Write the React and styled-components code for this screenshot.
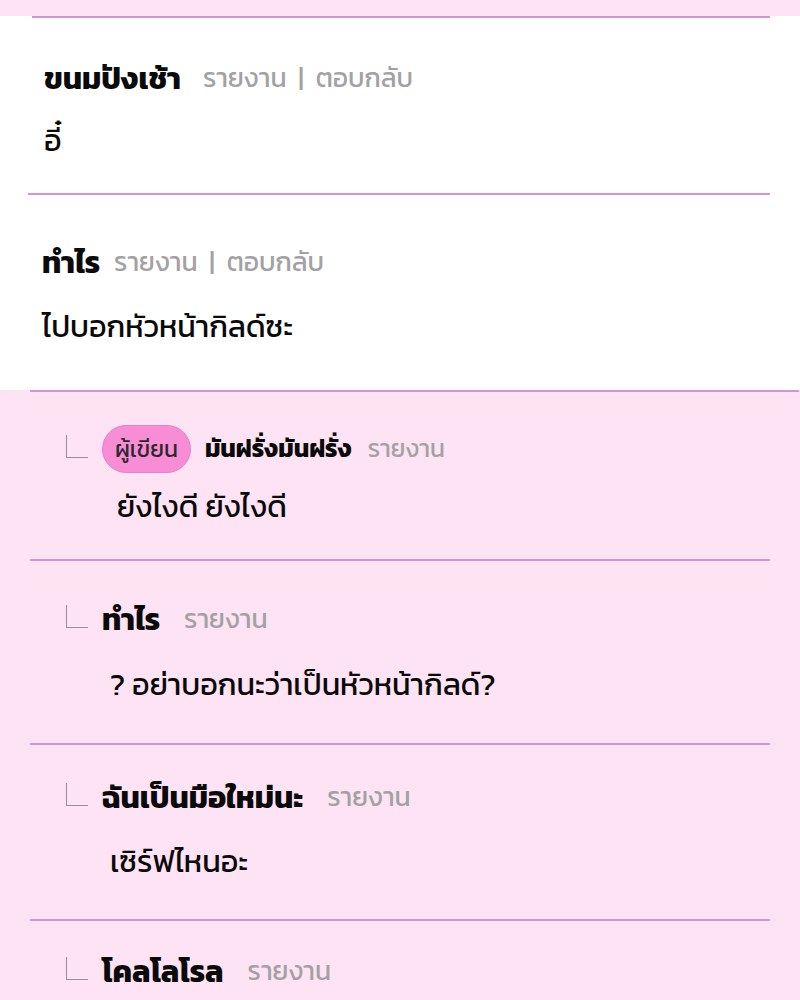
import React from 'react';
import styled, { createGlobalStyle } from 'styled-components';

const GlobalStyle = createGlobalStyle`
	html, body {
		margin: 0;
		padding: 0;
		background: #fde3f3;
	}
	body {
		font-family: Kanit, "Noto Sans Thai", "Liberation Sans", sans-serif;
		color: #111;
	}
`;

const Page = styled.div`
	width: 800px;
	height: 1000px;
	overflow: hidden;
	background: #fde3f3;
	padding-top: 16px;
	box-sizing: border-box;
`;

const Section = styled.div`
	background: ${(p) => (p.$white ? '#ffffff' : 'transparent')};
`;

const Item = styled.div`
	margin: 0 ${(p) => p.$mr || 30}px 0 ${(p) => p.$ml || 30}px;
	border-top: 2px solid #d493d2;
	padding: ${(p) => p.$pt}px 0 ${(p) => p.$pb}px ${(p) => p.$indent}px;
	display: flex;
	flex-direction: column;
	gap: ${(p) => p.$gap}px;
`;

const Header = styled.div`
	display: flex;
	align-items: center;
	height: 40px;
	gap: ${(p) => p.$gap}px;
`;

const Corner = styled.span`
	width: 21px;
	height: 22px;
	margin-top: -6px;
	border-left: 1.5px solid #9a8f98;
	border-bottom: 1.5px solid #9a8f98;
	flex-shrink: 0;
`;

const Name = styled.span`
	font-size: ${(p) => (p.$small ? 24.5 : 30.5)}px;
	font-weight: 700;
	color: #0a0a0a;
	line-height: 40px;
	white-space: nowrap;
`;

const Meta = styled.span`
	display: flex;
	gap: 12px;
	font-size: ${(p) => (p.$small ? 24.5 : 26.5)}px;
	font-weight: 400;
	color: #a3a1a3;
	line-height: 40px;
	margin-left: ${(p) => p.$shift || 0}px;
	white-space: nowrap;
`;

const Badge = styled.span`
	display: inline-flex;
	align-items: center;
	height: 48px;
	padding: 0 12px;
	border-radius: 24px;
	background: #f88dd6;
	border: 1px solid #ec7fc8;
	font-size: 23px;
	font-weight: 400;
	color: #2a2a2a;
	box-sizing: border-box;
`;

const Body = styled.div`
	height: 40px;
	line-height: 40px;
	font-size: 30.5px;
	font-weight: 400;
	color: #0a0a0a;
	padding-left: ${(p) => p.$indent || 0}px;
	white-space: nowrap;
`;

const comments = [
	{ name: 'ขนมปังเช้า', text: 'อี๋', pt: 40, gap: 22, pb: 33, ml: 32, indent: 12, hgap: 22 },
	{ name: 'ทำไร', text: 'ไปบอกหัวหน้ากิลด์ซะ', pt: 47, gap: 24, pb: 44, ml: 28, indent: 14, hgap: 14 },
];

const replies = [
	{ name: 'มันฝรั่งมันฝรั่ง', author: true, text: 'ยังไงดี ยังไงดี', pt: 37, gap: 17, pb: 33, body: 117 },
	{ name: 'ทำไร', text: '? อย่าบอกนะว่าเป็นหัวหน้ากิลด์?', pt: 38, gap: 25, pb: 39, body: 110 },
	{ name: 'ฉันเป็นมือใหม่นะ', text: 'เซิร์ฟไหนอะ', pt: 32, gap: 24, pb: 38, body: 110 },
	{ name: 'โคลโลโรล', text: '', pt: 30, gap: 24, pb: 40, body: 110 },
];

const App = () => {
	return (
		<>
			<GlobalStyle />
			<Page>
				<Section $white>
					{comments.map((c, i) => (
						<Item key={i} $pt={c.pt} $gap={c.gap} $pb={c.pb} $ml={c.ml} $indent={c.indent}>
							<Header $gap={c.hgap}>
								<Name>{c.name}</Name>
								<Meta>
									<span>รายงาน</span>
									<span>|</span>
									<span>ตอบกลับ</span>
								</Meta>
							</Header>
							<Body>{c.text}</Body>
						</Item>
					))}
				</Section>
				<Section>
					{replies.map((r, i) => (
						<Item key={i} $pt={r.pt} $gap={r.gap} $pb={r.pb} $indent={36} $mr={i === 0 ? 1 : 30}>
							<Header $gap={14}>
								<Corner />
								{r.author && <Badge>ผู้เขียน</Badge>}
								<Name $small={r.author}>{r.name}</Name>
								<Meta $small={r.author} $shift={r.author ? 2 : 10}>รายงาน</Meta>
							</Header>
							{r.text && <Body $indent={r.body - 66}>{r.text}</Body>}
						</Item>
					))}
				</Section>
			</Page>
		</>
	);
};

export default App;
